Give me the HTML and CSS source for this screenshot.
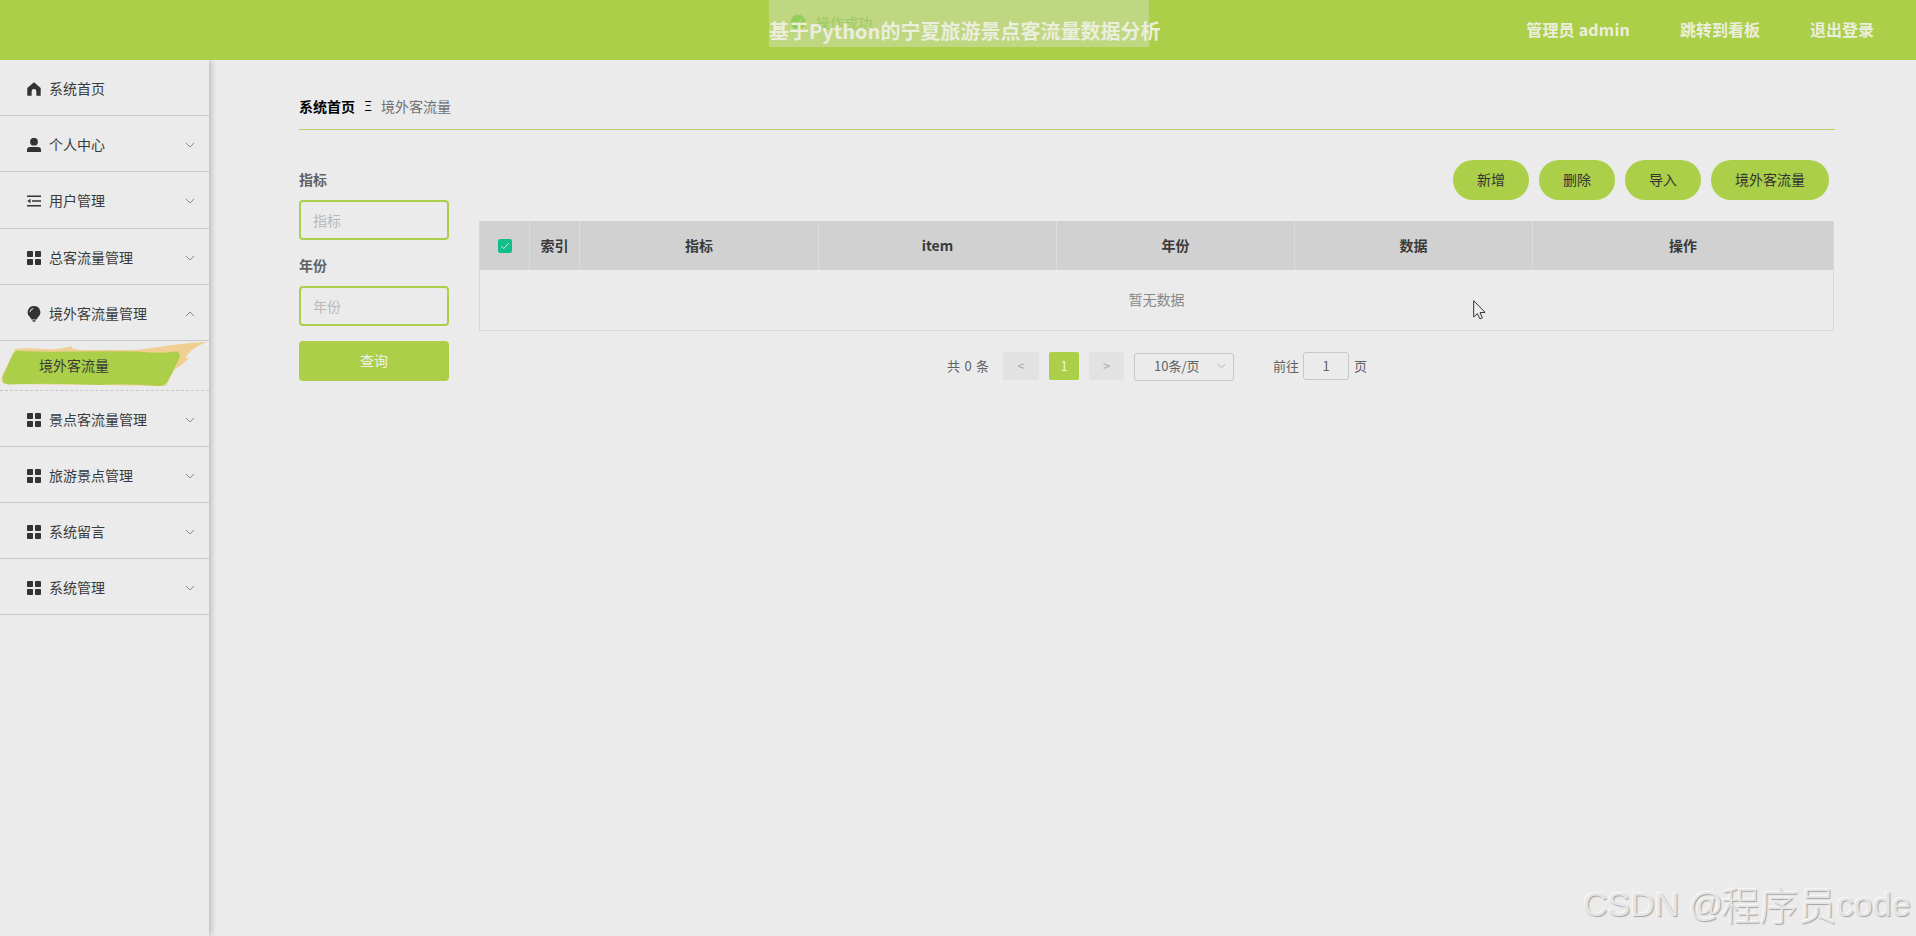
FILE: index.html
```html
<!DOCTYPE html>
<html lang="zh-CN">
<head>
<meta charset="utf-8">
<title>基于Python的宁夏旅游景点客流量数据分析</title>
<link rel="stylesheet" href="styles.css">
</head>
<body>
<svg class="defs" width="0" height="0" aria-hidden="true">
  <symbol id="down" viewBox="0 0 10 6"><path d="M.8.8 5 5 9.200.8" fill="none" stroke="currentColor"/></symbol>
  <symbol id="grid" viewBox="0 0 14 14"><rect width="6" height="6" rx=".8"/><rect x="8" width="6" height="6" rx=".8"/><rect y="8" width="6" height="6" rx=".8"/><rect x="8" y="8" width="6" height="6" rx=".8"/></symbol>
  <symbol id="home" viewBox="0 0 14 14"><path d="M7 .3 13.700 6v7.700H9.400V9.500a2.400 2.400 0 0 0-4.800 0v4.200H.3V6z"/></symbol>
  <symbol id="user" viewBox="0 0 14 14"><circle cx="7" cy="3.700" r="3.900"/><path d="M0 14v-2Q0 9 3 9h8q3 0 3 3v2z"/></symbol>
  <symbol id="fold" viewBox="0 0 14 14"><path d="M0 1.500h14V3H0zM5 6.200h9v1.500H5zM0 11h14v1.500H0zM3.500 4.700v4.600L.3 7z"/></symbol>
  <symbol id="bulb" viewBox="0 0 14 16"><path d="M7 0a6.300 6.300 0 0 1 4 11.200L9.500 13.600h-5L3 11.200A6.300 6.300 0 0 1 7 0zM5.200 14.300h3.600L8 15.700H6z"/><path d="M3 6.200Q3.300 3 6.300 2.500" fill="none" stroke="#ebebeb"/></symbol>
</svg>

<header class="header">
  <div class="toast">
    <svg class="toast-icon" viewBox="0 0 16 16"><circle cx="8" cy="8" r="7.500" fill="#93cd5a"/><path d="m4.500 8 2.500 2.500 4.500-5" fill="none" stroke="#b9d77b" stroke-width="1.500"/></svg>
    <span>操作成功</span>
  </div>
  <h1 class="title">基于Python的宁夏旅游景点客流量数据分析</h1>
  <nav class="user-nav"><span class="admin">管理员 admin</span><span>跳转到看板</span><span>退出登录</span></nav>
</header>

<div class="layout">
  <aside class="sidebar">
    <div class="item"><svg class="icon"><use href="#home"/></svg><span class="name">系统首页</span></div>
    <div class="item"><svg class="icon"><use href="#user"/></svg><span class="name">个人中心</span><svg class="arrow"><use href="#down"/></svg></div>
    <div class="item tall"><svg class="icon"><use href="#fold"/></svg><span class="name">用户管理</span><svg class="arrow"><use href="#down"/></svg></div>
    <div class="item"><svg class="icon"><use href="#grid"/></svg><span class="name">总客流量管理</span><svg class="arrow"><use href="#down"/></svg></div>
    <div class="item"><svg class="icon bulb"><use href="#bulb"/></svg><span class="name">境外客流量管理</span><svg class="arrow up"><use href="#down"/></svg></div>
    <div class="sub">
      <svg class="brush" viewBox="0 0 209 50">
        <path d="M15 8C30 6 44 9 56 8Q66 7 72 5Q70 8 80 9L136 9C160 6 181 2 207 1Q194 6 188 13Q183 19 190 16Q180 26 174 29L166 45L100 44L5 43Q0 42 2 35z" fill="#f0cf92"/>
        <path d="M17 9.500Q28 11 70 10.500T138 10.500Q160 13 176 10.500Q182 12 179 18L169 38Q166 45 159 45Q125 42 98 44Q45 42 8 43.500Q1 42 3 35L12 15Q14 11 17 9.500z" fill="#abcf49"/>
      </svg>
      <span class="sub-label">境外客流量</span>
    </div>
    <div class="item"><svg class="icon"><use href="#grid"/></svg><span class="name">景点客流量管理</span><svg class="arrow"><use href="#down"/></svg></div>
    <div class="item"><svg class="icon"><use href="#grid"/></svg><span class="name">旅游景点管理</span><svg class="arrow"><use href="#down"/></svg></div>
    <div class="item"><svg class="icon"><use href="#grid"/></svg><span class="name">系统留言</span><svg class="arrow"><use href="#down"/></svg></div>
    <div class="item"><svg class="icon"><use href="#grid"/></svg><span class="name">系统管理</span><svg class="arrow"><use href="#down"/></svg></div>
  </aside>

  <main class="main">
    <div class="crumbs"><b>系统首页</b><span class="sep">Ξ</span><span>境外客流量</span></div>
    <div class="content">
      <form class="search">
        <label class="label" for="zb">指标</label>
        <input class="input" id="zb" placeholder="指标">
        <label class="label second" for="nf">年份</label>
        <input class="input" id="nf" placeholder="年份">
        <button class="query" type="button">查询</button>
      </form>
      <section class="results">
        <div class="actions"><button class="pill">新增</button><button class="pill">删除</button><button class="pill">导入</button><button class="pill">境外客流量</button></div>
        <div class="table">
          <div class="thead">
            <div class="check-cell"><svg class="check" viewBox="0 0 14 14"><rect width="14" height="14" rx="2" fill="#13be8b"/><path d="m3.200 7 2.500 2.600L10.800 4" fill="none" stroke="#c9ead9"/></svg></div>
            <div>索引</div><div>指标</div><div>item</div><div>年份</div><div>数据</div><div>操作</div>
          </div>
          <div class="empty">暂无数据</div>
        </div>
        <div class="pager">
          <span class="total">共 0 条</span>
          <span class="page prev">&lt;</span><span class="page current">1</span><span class="page next">&gt;</span>
          <span class="size">10条/页<svg class="size-arrow"><use href="#down"/></svg></span>
          <span class="jump">前往</span><span class="jump-input">1</span><span>页</span>
        </div>
      </section>
    </div>
  </main>
</div>
<svg class="cursor" viewBox="0 0 13 20"><path d="M.7.700v16.300l3.700-3.400 2.500 5.300 2.500-1.100-2.400-5.100 5-.4z" fill="#eee" stroke="#333"/></svg>
<div class="watermark">CSDN @<span class="wm-cjk">程序员</span><span class="wm-code">code</span></div>
</body>
</html>
```

FILE: styles.css
```css
* { box-sizing: border-box; }
body {
  margin: 0;
  height: 936px;
  overflow: hidden;
  position: relative;
  background: #ebebeb;
  color: #3a3a3a;
  font: 14px/20px "Noto Sans CJK SC", sans-serif;
}
button, input { font: inherit; color: inherit; }
.defs { position: absolute; }

.header {
  position: relative;
  height: 60px;
  background: #abcf49;
  display: flex;
  align-items: center;
  color: #ebeedd;
}
.title { margin: 2px 0 0 769px; position: relative; font-size: 20px; line-height: 30px; font-weight: 700; white-space: nowrap; }
.toast {
  position: absolute;
  left: 769px;
  top: 0;
  width: 380px;
  height: 47px;
  padding: 0 0 3px 21px;
  display: flex;
  align-items: center;
  gap: 10px;
  background: #c0d781;
  color: #98c965;
}
.toast-icon { width: 16px; height: 16px; }
.user-nav { margin: -2px 0 0 auto; padding-right: 42px; display: flex; gap: 50px; font-size: 16px; font-weight: 700; }
.admin { letter-spacing: .2px; }

.layout { display: flex; height: 876px; }
.sidebar { width: 209px; flex: none; box-shadow: 2px 0 6px rgba(0,0,0,.22); }
.item {
  height: 56px;
  padding: 2px 14px 0 27px;
  display: flex;
  align-items: center;
  gap: 8px;
  border-bottom: 1px solid #c7c7c7;
}
.name { padding-bottom: 2px; }
.tall { height: 57px; }
.icon { width: 14px; height: 14px; fill: #333; overflow: visible; }
.bulb { height: 16px; }
.arrow { width: 10px; height: 6px; margin-left: auto; color: #888; }
.up { transform: rotate(180deg); }
.sub { position: relative; height: 50px; border-bottom: 1px dashed #c7c7c7; }
.brush { display: block; width: 209px; height: 50px; }
.sub-label { position: absolute; left: 39px; top: 14px; }

.main { flex: 1; padding: 30px 81px 0 90px; }
.crumbs {
  height: 40px;
  padding-top: 6px;
  display: flex;
  border-bottom: 1px solid #b8d36c;
  color: #707070;
}
.crumbs b, .sep { color: #000; }
.sep { width: 26px; text-align: center; font-size: 13px; }
.content { display: flex; gap: 30px; padding-top: 30px; }
.search { width: 150px; display: flex; flex-direction: column; }
.label { height: 40px; line-height: 38px; font-weight: 700; color: #606266; }
.second { margin-top: 6px; }
.input { width: 150px; height: 40px; padding: 0 12px 1px; border: 2px solid #abcf49; border-radius: 4px; background: transparent; outline: 0; }
.input::placeholder { color: #b8b8b8; opacity: 1; }
.query { height: 40px; margin-top: 15px; padding-bottom: 3px; border: 0; border-radius: 4px; background: #abcf49; color: #f0f2e8; }

.results { width: 1355px; }
.actions { display: flex; justify-content: flex-end; gap: 10px; padding-right: 5px; }
.pill { height: 40px; padding: 0 24px 2px; border: 0; border-radius: 20px; background: #abcf49; color: #333; }
.table { margin-top: 21px; border: 1px solid #d9d9d9; border-top: 0; height: 110px; }
.thead {
  display: grid;
  grid-template-columns: 50px 50px 239px 238px 238px 238px 1fr;
  height: 49px;
  background: #d1d1d1;
  font-weight: 700;
}
.thead > div { display: flex; align-items: center; justify-content: center; padding-bottom: 2px; border-right: 1px solid #dcdcdc; }
.thead > .check-cell { padding-bottom: 0; }
.thead > div:last-child { border-right: 0; }
.check { width: 14px; height: 14px; }
.empty { line-height: 59px; text-align: center; color: #888; }
.pager { display: flex; align-items: center; margin: 21px 0 0 468px; height: 28px; font-size: 13px; color: #606266; }
.total { width: 56px; white-space: nowrap; word-spacing: 1.500px; }
.page { height: 28px; border-radius: 2px; text-align: center; line-height: 28px; background: #e2e2e2; color: #aaa; }
.prev { width: 36px; }
.current { width: 30px; margin: 0 10px; background: #abcf49; color: #eef2df; }
.next { width: 35px; }
.size, .jump-input { height: 28px; border: 1px solid #c8c8c8; border-radius: 3px; display: flex; align-items: center; }
.size { width: 100px; margin: 1px 0 0 10px; padding: 0 7px 1px 19px; }
.size-arrow { width: 9px; height: 6px; margin-left: auto; color: #aaa; }
.jump { margin-left: 39px; }
.jump-input { width: 46px; margin: 0 5px 0 4px; justify-content: center; }

.cursor { position: absolute; left: 1473px; top: 300px; width: 13px; height: 20px; }
.watermark {
  position: absolute;
  left: 1583px;
  top: 880px;
  display: flex;
  line-height: 48px;
  font-family: "Liberation Sans", sans-serif;
  font-size: 34px;
  white-space: pre;
  color: #e5e5e5;
  text-shadow: 1px 1px 1px #a3a3a3, -1px -1px 1px #fafafa;
}
.wm-cjk { margin: -1px 0 0 -2px; font: 300 38.500px/48px "Noto Sans CJK SC", sans-serif; }
```
